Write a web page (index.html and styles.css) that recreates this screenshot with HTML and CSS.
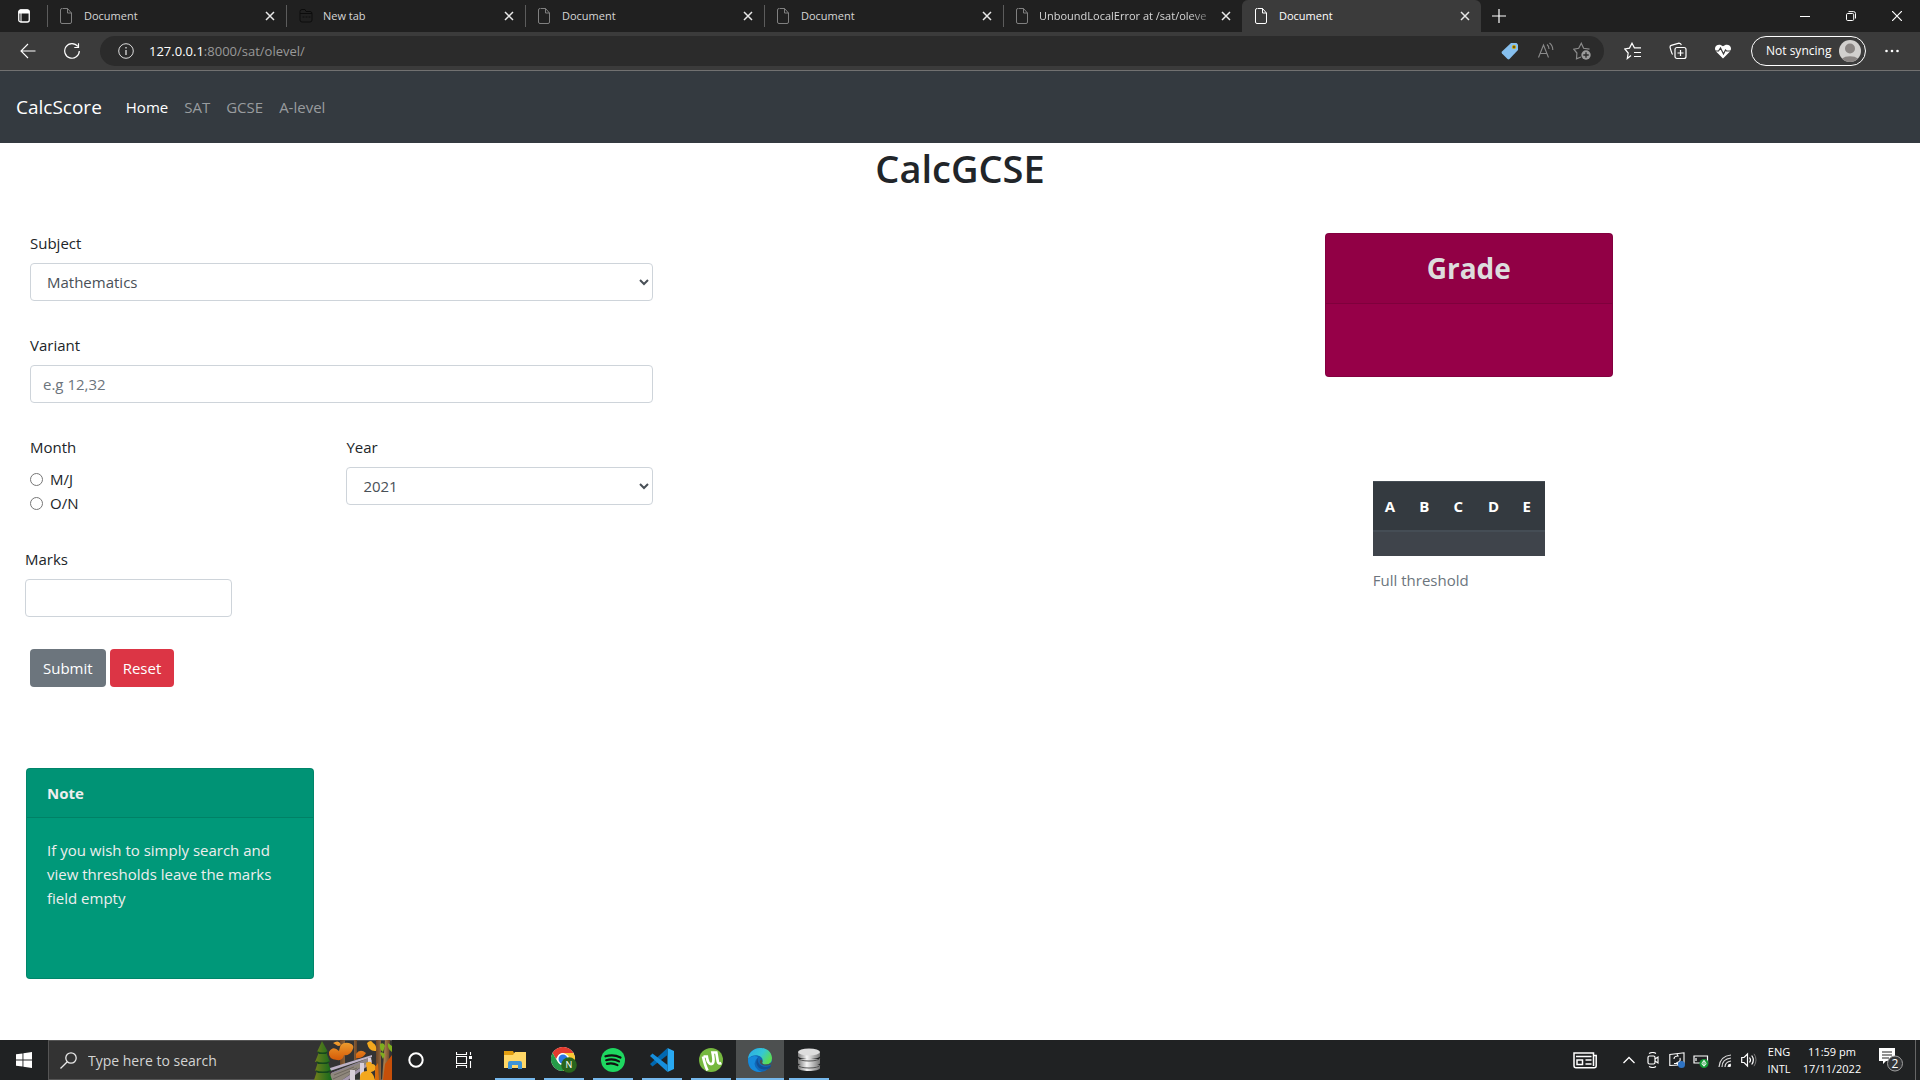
FILE: index.html
```html
<!DOCTYPE html>
<html lang="en">
<head>
<meta charset="utf-8">
<meta name="viewport" content="width=device-width, initial-scale=1">
<title>Document</title>
<link rel="stylesheet" href="styles.css">
</head>
<body>
<svg class="defs" aria-hidden="true">
  <symbol id="page" viewBox="0 0 12 18"><path d="M2.5 1.5h5l4 4.5v9a1.500 1.500 0 0 1-1.500 1.500H2A1.500 1.500 0 0 1 .5 15V3A1.500 1.500 0 0 1 2 1.500M7.500 1.500V6h4" fill="none" stroke="currentColor"/></symbol>
  <symbol id="cross" viewBox="0 0 10 10"><path d="M1 1l8 8M9 1l-8 8" fill="none" stroke="currentColor" stroke-width="1.500"/></symbol>
</svg>

<header class="browser">
  <div class="tabstrip">
    <button class="workspace" aria-label="Tab actions"><svg width="12" height="14" viewBox="0 0 12 14"><rect x=".75" y="1" width="10.500" height="12" rx="2" fill="none" stroke="#fff" stroke-width="1.300"/><path d="M.5 4.500V3A2.500 2.500 0 0 1 3 .5h6A2.500 2.500 0 0 1 11.500 3v1.500z" fill="#fff"/><path d="M3 4v9" stroke="#fff"/></svg></button>
    <div class="tab"><svg class="fav"><use href="#page"/></svg><span>Document</span><button aria-label="Close tab"><svg><use href="#cross"/></svg></button></div>
    <div class="tab newtab"><svg class="fav wide" viewBox="0 0 14 16"><path d="M1 3.500A2 2 0 0 1 3 1.500h3l1 2h4a2 2 0 0 1 2 2V12a2 2 0 0 1-2 2H3a2 2 0 0 1-2-2zM1 5.500h12M3.500 9h2M6.500 9h2M9.500 9h2" fill="none" stroke="#0c0c0c"/></svg><span>New tab</span><button aria-label="Close tab"><svg><use href="#cross"/></svg></button></div>
    <div class="tab"><svg class="fav"><use href="#page"/></svg><span>Document</span><button aria-label="Close tab"><svg><use href="#cross"/></svg></button></div>
    <div class="tab"><svg class="fav"><use href="#page"/></svg><span>Document</span><button aria-label="Close tab"><svg><use href="#cross"/></svg></button></div>
    <div class="tab faded"><svg class="fav"><use href="#page"/></svg><span>UnboundLocalError at /sat/oleve</span><button aria-label="Close tab"><svg><use href="#cross"/></svg></button></div>
    <div class="tab active"><svg class="fav"><use href="#page"/></svg><span>Document</span><button aria-label="Close tab"><svg><use href="#cross"/></svg></button></div>
    <button class="addtab" aria-label="New tab"><svg width="14" height="14" viewBox="0 0 14 14"><path d="M7 0v14M0 7h14" stroke="#fff" stroke-width="1.200"/></svg></button>
    <div class="window-buttons">
      <button aria-label="Minimise"><svg width="10" height="10" viewBox="0 0 10 10"><path d="M0 5.500h10" stroke="#fff"/></svg></button>
      <button aria-label="Restore"><svg width="10" height="10" viewBox="0 0 10 10"><path d="M2 2.500h4.500A1.200 1.200 0 0 1 7.700 3.700v4.600a1.200 1.200 0 0 1-1.200 1.200H1.700A1.200 1.200 0 0 1 .5 8.300V3.700A1.200 1.200 0 0 1 1.700 2.500zM2.500.6H7.500a2 2 0 0 1 2 2V7.500" fill="none" stroke="#fff"/></svg></button>
      <button aria-label="Close window"><svg width="10" height="10" viewBox="0 0 10 10"><path d="M0 0l10 10M10 0L0 10" stroke="#fff" stroke-width="1.200"/></svg></button>
    </div>
  </div>
  <div class="toolbar">
    <button class="tool" aria-label="Back"><svg width="16" height="16" viewBox="0 0 16 16"><path d="M15.500 8H1M8 1L1 8l7 7" fill="none" stroke="#fff" stroke-width="1.100"/></svg></button>
    <button class="tool" aria-label="Refresh"><svg width="16" height="16" viewBox="0 0 16 16"><path d="M13.800 3.500A7.300 7.300 0 1 0 15.300 8M14.500.3v4.200h-4.200" fill="none" stroke="#fff" stroke-width="1.200"/></svg></button>
    <div class="address">
      <svg width="16" height="16" viewBox="0 0 16 16"><circle cx="8" cy="8" r="7.300" fill="none" stroke="#ddd"/><path d="M8 7v5M8 4v1.500" stroke="#ddd" stroke-width="1.300"/></svg>
      <a class="url" href="http://127.0.0.1:8000/sat/olevel/"><b>127.0.0.1</b>:8000/sat/olevel/</a>
      <button aria-label="Shopping"><svg width="18" height="18" viewBox="0 0 18 18"><path d="M10 1h5.500L17 2.500V8l-8.500 9a1.500 1.500 0 0 1-2 0L1 11.500a1.500 1.500 0 0 1 0-2z" fill="#86bfee"/><circle cx="13" cy="5" r="1.500" fill="#333" stroke="#d6a800" stroke-width="1.200"/></svg></button>
      <button aria-label="Read aloud"><svg width="18" height="18" viewBox="0 0 18 18"><path d="M1.500 15.500L6.500 3l5 12.500M3.200 11.500h6.700M10 2.500q2 1.500 2 4.500M12.500 1q3.300 2.500 3.300 7" fill="none" stroke="#8b8b8b" stroke-width="1.100"/></svg></button>
      <button aria-label="Add favourite"><svg width="18" height="18" viewBox="0 0 18 18"><path d="M8 15l-4.500 1.800.4-5.800L.8 7.200l4.900-.9L8.300 1.300l2.300 5 5.900.9" fill="none" stroke="#8b8b8b" stroke-width="1.200"/><circle cx="13" cy="13" r="4.700" fill="#9a9a9a"/><path d="M13 10.300v5.400M10.300 13h5.400" stroke="#2b2b2b" stroke-width="1.300"/></svg></button>
    </div>
    <button class="tool wide" aria-label="Favourites"><svg width="18" height="18" viewBox="0 0 18 18"><path d="M7 13.500L3.300 16.500l.9-5.500L.8 7l4.700-.9L8 1.200l2.400 4.600H17M10 10.500h7M10 14.500h7" fill="none" stroke="#fff" stroke-width="1.200"/></svg></button>
    <button class="tool wide" aria-label="Collections"><svg width="18" height="18" viewBox="0 0 18 18"><rect x="6" y="5.500" width="11" height="11" rx="2" fill="none" stroke="#fff" stroke-width="1.200"/><path d="M11.500 8v6M8.500 11h6M3.600 12.500Q2.500 11 1 5.200 1 3.800 2.200 3.400L10 1.100q2 0 2.300 2" fill="none" stroke="#fff" stroke-width="1.200"/></svg></button>
    <button class="tool wide" aria-label="Browser essentials"><svg width="18" height="18" viewBox="0 0 18 18"><path d="M9 16.500L2 9.500C-1.500 4 5 .5 9 4.300 13 .5 19.500 4 16 9.500z" fill="#fff"/><path d="M0 9h4.500l2-3 3 6 2-4 1 1H18" fill="none" stroke="#3b3b3b" stroke-width="1.200"/></svg></button>
    <button class="profile">Not syncing<svg width="22" height="22" viewBox="0 0 22 22"><circle cx="11" cy="11" r="11" fill="#d2d0ce"/><circle cx="11" cy="8.500" r="5" fill="#8a8583"/><path d="M3 18.500a9.500 5 0 0 1 16 0A11 11 0 0 1 3 18.500" fill="#8a8583"/></svg></button>
    <button class="tool more" aria-label="Settings"><svg width="14" height="4" viewBox="0 0 14 4"><circle cx="1.500" cy="2" r="1.300" fill="#fff"/><circle cx="7" cy="2" r="1.300" fill="#fff"/><circle cx="12.500" cy="2" r="1.300" fill="#fff"/></svg></button>
  </div>
</header>

<nav class="navbar">
  <a class="brand" href="#">CalcScore</a>
  <a class="current" href="#">Home</a>
  <a href="#">SAT</a>
  <a href="#">GCSE</a>
  <a href="#">A-level</a>
</nav>

<main>
  <h1>CalcGCSE</h1>
  <div class="columns">
    <div class="left">
      <form>
        <div class="field"><label for="subject">Subject</label><select id="subject"><option>Mathematics</option></select></div>
        <div class="field"><label for="variant">Variant</label><input id="variant" type="text" placeholder="e.g 12,32"></div>
        <div class="pair">
          <fieldset>
            <legend>Month</legend>
            <label class="radio"><input type="radio" name="month">M/J</label>
            <label class="radio"><input type="radio" name="month">O/N</label>
          </fieldset>
          <div class="field"><label for="year">Year</label><select id="year"><option>2021</option></select></div>
        </div>
        <div class="field marks"><label for="marks">Marks</label><input id="marks" type="text"></div>
        <div class="actions"><button type="submit" class="btn">Submit</button><button type="reset" class="btn danger">Reset</button></div>
      </form>
      <section class="card note">
        <h2>Note</h2>
        <p>If you wish to simply search and view thresholds leave the marks field empty</p>
      </section>
    </div>
    <div class="right">
      <section class="card grade"><h2>Grade</h2></section>
      <table>
        <caption>Full threshold</caption>
        <thead><tr><th>A</th><th>B</th><th>C</th><th>D</th><th>E</th></tr></thead>
        <tbody><tr><td></td><td></td><td></td><td></td><td></td></tr></tbody>
      </table>
    </div>
  </div>
</main>

<footer class="taskbar">
  <button class="task" aria-label="Start"><svg width="16" height="16" viewBox="0 0 16 16"><path d="M0 2.300L6.500 1.400V7.500H0zM7.400 1.200L16 0v7.500H7.400zM0 8.400h6.500v6.200L0 13.700zM7.400 8.400H16V16l-8.600-1.200z" fill="#fff"/></svg></button>
  <div class="search">
    <svg class="lens" width="17" height="17" viewBox="0 0 17 17"><circle cx="11" cy="6" r="5.200" fill="none" stroke="#e8e8e8" stroke-width="1.300"/><path d="M7.300 9.700L.5 16.500" stroke="#e8e8e8" stroke-width="1.300"/></svg>
    <input type="text" aria-label="Search" placeholder="Type here to search">
    <svg class="art" width="78" height="40" viewBox="0 0 78 40">
      <defs>
        <linearGradient id="bark"><stop stop-color="#6b4527"/><stop offset=".6" stop-color="#a97e4e"/><stop offset="1" stop-color="#6b4527"/></linearGradient>
        <linearGradient id="leaf" x2="0" y2="1"><stop stop-color="#f0a030"/><stop offset="1" stop-color="#d45a08"/></linearGradient>
        <linearGradient id="fir"><stop stop-color="#74801c"/><stop offset="1" stop-color="#13691c"/></linearGradient>
      </defs>
      <path d="M26 0h5v26h-5zM40 0h3v20h-3z" fill="url(#bark)"/>
      <path d="M15 12q4-7 10-1 1-10 10-8 7 2 3 8-3 5-8 4-1 6-7 5-9-1-8-8M19 3q5-3 7 0 2 3-2 3zM42 14q4-6 10-1-3 6-10 5z" fill="url(#leaf)"/>
      <path d="M17 33L57 17l1 4-14 8-16 11H15z" fill="#8f877c"/>
      <path d="M20 35l20-8M19 39l24-11" stroke="#6e675f" fill="none"/>
      <path d="M16 28L58 15v2L16 31z" fill="#bdb2c6"/>
      <path d="M18 33L56 19" stroke="#8b8198" fill="none"/>
      <path d="M28 40L58 20v3L34 40z" fill="#a698ae"/>
      <path d="M36 30h5v10h-5zM46 23h4v17h-4zM54 18h3v12h-3z" fill="#d9cfda"/>
      <path d="M62 0h5v40h-5zM71 0h5l-2 40h-6z" fill="url(#bark)"/>
      <path d="M53 3q4-4 6 0 4 2 3 8-7 1-9-8M52 23q5-3 6 1 4 0 4 5-4 5-9 2zM46 40q-1-9 7-9 6 0 8 9z" fill="#f3a81e"/>
      <path d="M66 4q4-2 5 2l-2 6q-4-3-3-8M66 13q3-2 5 2l-2 4zM74 3l4 3v6q-5-3-4-9" fill="#7fae1e"/>
      <path d="M71 24l7-9v25h-9z" fill="#c64f09"/><path d="M61 27l3-4 1 17h-4z" fill="#d56b0c"/>
      <path d="M8 1l6 11h-2l4 10h-2l3 9h-2l3 9H0l3-9H1l3-9H1l4-10H3z" fill="url(#fir)"/>
      <path d="M3 11q6 3 11 0l-2 3H5zM2 21q7 3 14 0l-3 3H4zM1 30q8 3 16 0l-3 3H4z" fill="#15481c"/>
    </svg>
  </div>
  <button class="task" aria-label="Cortana"><svg width="16" height="16" viewBox="0 0 16 16"><circle cx="8" cy="8" r="6.700" fill="none" stroke="#fff" stroke-width="2"/></svg></button>
  <button class="task" aria-label="Task view"><svg width="16" height="16" viewBox="0 0 16 16"><path d="M.5 0v2.500h10V0M.5 16v-2.500h10V16M.5 4.500h10v7H.5zM14.500 0v3M14.500 9v7" fill="none" stroke="#fff" stroke-width="1.100"/><path d="M13 4h3v3h-3z" fill="#fff"/></svg></button>
  <div class="apps">
    <button class="task open" aria-label="File Explorer"><svg width="22" height="18" viewBox="0 0 22 18"><path d="M0 0h9l1 2H22v15H0z" fill="#e29e10"/><path d="M0 4h9l2-3h11v16H0z" fill="#ffd766"/><path d="M4 18v-6q0-2 2-2h10q2 0 2 2v6h-4v-4H8v4z" fill="#3d93d6"/></svg></button>
    <button class="task open" aria-label="Chrome"><svg width="26" height="26" viewBox="0 0 26 26"><circle cx="12" cy="12" r="12" fill="#fff"/><path d="M1.600 6A12 12 0 0 1 22.400 6H12A6 6 0 0 0 6.500 9.500L5 12z" fill="#e33b2e"/><path d="M22.400 6A12 12 0 0 1 12 24L17.200 15A6 6 0 0 0 17 8.500L12 6z" fill="#fcc934"/><path d="M12 24A12 12 0 0 1 1.600 6L6.800 15A6 6 0 0 0 13 18z" fill="#259b48"/><circle cx="12" cy="12" r="5.700" fill="#fff"/><circle cx="12" cy="12" r="4.500" fill="#2b78e4"/><circle cx="18" cy="18" r="7.800" fill="#29651d"/><text x="18" y="21" class="badge-letter">N</text></svg></button>
    <button class="task open" aria-label="Spotify"><svg width="24" height="24" viewBox="0 0 24 24"><circle cx="12" cy="12" r="12" fill="#1ed760"/><path d="M4.500 8.300q8-2.500 15 1.200M5.200 12.200q7-2 12.800 1.200M6 15.900q5.500-1.500 10.500 1.200" fill="none" stroke="#111" stroke-width="2.200" stroke-linecap="round"/></svg></button>
    <button class="task open" aria-label="Visual Studio Code"><svg width="24" height="24" viewBox="0 0 24 24"><path d="M17.500 0L24 3v18l-6.500 3z" fill="#29a9f2"/><path d="M17.500 0v7L2.500 18.500 0 16z" fill="#0068b0"/><path d="M17.500 24v-7L2.500 5.500 0 8z" fill="#168fdc"/></svg></button>
    <button class="task open" aria-label="uTorrent"><svg width="24" height="24" viewBox="0 0 24 24"><circle cx="12" cy="12" r="12" fill="#76b83f"/><path d="M4 8.500q2 9 4.500 14M4.500 8.500h3.300q1 8 4.700 7.500 3-.5 1.500-9l-.5-2.500h3.800l1.500 9q.5 3 3.500 1.500" fill="none" stroke="#fff" stroke-width="2.700"/></svg></button>
    <button class="task open focus" aria-label="Edge"><svg width="24" height="24" viewBox="0 0 24 24"><defs><linearGradient id="edge-top" y2=".5"><stop stop-color="#2aa8e8"/><stop offset=".6" stop-color="#35c8d4"/><stop offset="1" stop-color="#5bdc55"/></linearGradient></defs><circle cx="12" cy="12" r="12" fill="#1067b8"/><path d="M0 11C1-3 23-4 24 10q0 6-6 6.500-5 0-3.500-3C16 8 6 4 0 11" fill="url(#edge-top)"/><path d="M0 11q5-5 10-2-7 7 0 13 1 1 4 1.800Q0 25 0 11" fill="#1689da"/><path d="M10.500 9q-2 4 1 7.500 4 4 10.300 1.500Q24 16 22 20q-6 3-11 0-5-5-.5-11" fill="#124f95"/><path d="M14.500 13.500q-1.500 3 3.500 3 3 0 6-2.500l-.5 2.500q-5 2-9 .5-4-2-2-5 1.500-1.500 2 1.500" fill="#4d5050"/></svg></button>
    <button class="task open" aria-label="Database"><svg width="24" height="24" viewBox="0 0 24 24"><defs><linearGradient id="metal"><stop stop-color="#777"/><stop offset=".4" stop-color="#f4f4f4"/><stop offset="1" stop-color="#777"/></linearGradient></defs><path d="M1 4v4c0 4 22 4 22 0V4zM1 11v4c0 4 22 4 22 0v-4zM1 17v3c0 4 22 4 22 0v-3z" fill="url(#metal)"/><path d="M1 10c0 4 22 4 22 0M1 17c0 4 22 4 22 0" fill="none" stroke="#555"/><ellipse cx="12" cy="4" rx="11" ry="3.500" fill="#ddd"/></svg></button>
  </div>
  <div class="tray">
    <svg width="24" height="17" viewBox="0 0 24 17"><path d="M20.500 3.500h2.700v10.300a2 2 0 0 1-2 2H3a2 2 0 0 1-2-2V1h19.500v13M3 4.500h15.500M12.500 8h6M12.500 12h6M4 8h5.500v4.500H4z" fill="none" stroke="#fff" stroke-width="1.500"/></svg>
    <svg class="chevron" width="12" height="8" viewBox="0 0 12 8"><path d="M.5 7L6 1.500 11.500 7" fill="none" stroke="#fff" stroke-width="1.300"/></svg>
    <div class="status">
      <svg width="16" height="16" viewBox="0 0 16 16"><rect x="3" y="4" width="7" height="8" rx="1.500" fill="none" stroke="#fff" stroke-width="1.200"/><path d="M10 7l3-2v6l-3-2M4 1.500q4-2 7 0M4 14.500q4 2 7 0" fill="none" stroke="#fff" stroke-width="1.100"/></svg>
      <svg width="16" height="16" viewBox="0 0 16 16"><path d="M.8 2.500L15 .8v12L.8 13.500zM5 7q0-3 4-3l-1-2M11 6q1 4-3 4.500l1 2M5 11.500h3" fill="none" stroke="#fff" stroke-width="1.100"/><circle cx="12.500" cy="12.500" r="3.500" fill="#2e73c3"/></svg>
      <svg width="16" height="16" viewBox="0 0 16 16"><path d="M1 4h13.500v7H1zM3 6v3" fill="none" stroke="#fff" stroke-width="1.200"/><circle cx="11" cy="11.500" r="4.500" fill="#149a35"/><path d="M11 8.500q4 4 0 5-4-1 0-5v6" fill="none" stroke="#fff"/></svg>
      <svg width="16" height="16" viewBox="0 0 16 16"><path d="M2 15Q3 4 14 3M5 15q0-8 9-9M8 15q0-5 6-6M11 15q0-2 3-3" fill="none" stroke="#ddd" stroke-width="1.200"/><circle cx="12.500" cy="13.500" r="1.500" fill="#fff"/></svg>
      <svg width="16" height="16" viewBox="0 0 16 16"><path d="M.7 5.500H3L6.500 2v12L3 10.500H.7zM8.500 5.500q2 2.500 0 5M10.700 3.500q3.300 4.500 0 9" fill="none" stroke="#fff" stroke-width="1.200"/><path d="M13 1.800q4 6 0 12.400" fill="none" stroke="#777"/></svg>
    </div>
    <div class="lang">ENG<br>INTL</div>
    <div class="clock">11:59 pm<br>17/11/2022</div>
    <svg class="notify" width="24" height="24" viewBox="0 0 24 24"><path d="M0 0h16v13H7l-3 3v-3H0z" fill="#fff"/><path d="M3 4h10M3 7h10M3 10h7" stroke="#222"/><circle cx="16" cy="15.500" r="7.500" fill="#343638" stroke="#a0a0a0"/><text x="16" y="19.500" class="count">2</text></svg>
  </div>
</footer>
</body>
</html>
```

FILE: styles.css
```css
* { box-sizing: border-box; }

body {
  margin: 0;
  min-height: 100vh;
  display: flex;
  flex-direction: column;
  background: #fff;
  color: #212529;
  font: 15px/24px "Open Sans", "Noto Sans", sans-serif;
}

button, input, select { font: inherit; margin: 0; }
button { border: 0; padding: 0; background: none; color: inherit; }
a { color: inherit; text-decoration: none; }
svg { display: block; flex: none; }
.defs { display: none; }

/* Browser frame */
.browser { color: #fff; font-size: 12px; }
.tabstrip { display: flex; height: 32px; background: #202020; }
.workspace { width: 47px; display: grid; place-items: center; }
.tab {
  flex: 0 1 239px;
  min-width: 0;
  display: flex;
  align-items: center;
  gap: 12px;
  padding: 0 11px 0 12px;
  border-left: 1px solid #5c5c5c;
  border-image: linear-gradient(transparent 6px, #5c5c5c 6px, #5c5c5c 26px, transparent 26px) 1;
  color: #d6d6d6;
  font-size: 11px;
}
.tab span { flex: 1; white-space: nowrap; }
.faded { gap: 11px; }
.faded span { mask-image: linear-gradient(90deg, #000 88%, transparent 105%); }
.fav { width: 12px; height: 18px; color: #808080; }
.fav.wide { width: 14px; height: 16px; }
.newtab { gap: 10px; }
.tab button svg { width: 10px; height: 10px; color: #e8e8e8; }
.tab.active { background: #3b3b3b; border-image: none; border-color: #3b3b3b; border-radius: 6px 6px 0 0; color: #fff; }
.active .fav { color: #fff; }
.addtab { width: 36px; display: grid; place-items: center; }
.window-buttons { display: flex; margin-left: auto; }
.window-buttons button { width: 46px; display: grid; place-items: center; }

.toolbar {
  display: flex;
  align-items: center;
  height: 39px;
  padding: 0 10px 0 6px;
  background: #3b3b3b;
  border-bottom: 1px solid #717171;
}
.tool { width: 44px; height: 30px; display: grid; place-items: center; }
.wide.tool { width: 45px; }
.toolbar .wide:nth-of-type(3) { margin-left: 6px; }
.address {
  flex: 1;
  display: flex;
  align-items: center;
  gap: 18px;
  height: 30px;
  margin-left: 6px;
  padding: 0 13px 0 18px;
  border-radius: 15px;
  background: #2b2b2b;
}
.url { flex: 1; color: #999; font-size: 13px; margin-left: -3px; }
.url b { color: #fff; font-weight: 400; }
.profile {
  display: flex;
  align-items: center;
  justify-content: space-between;
  width: 115px;
  height: 30px;
  margin-left: 6px;
  padding: 0 4px 0 14px;
  border: 1px solid #fff;
  border-radius: 15px;
}
.more { width: 36px; margin-left: 8px; }

/* Site navigation */
.navbar {
  display: flex;
  align-items: center;
  gap: 16px;
  height: 72px;
  padding: 0 16px;
  background: #343a40;
  color: #999c9f;
}
.brand { margin-right: 8px; color: #fff; font-size: 19px; }
.current { color: #fff; }

/* Page */
main { flex: 1; padding-bottom: 61px; }
h1 { margin: 0; text-align: center; font-size: 38px; line-height: 50px; font-weight: 600; }
.columns { display: grid; grid-template-columns: 34% 1fr 31%; padding-top: 38px; }
.right { grid-column: 3; padding-top: 2px; }
form { display: grid; gap: 32px; padding-left: 30px; }
.field { display: grid; gap: 8px; align-content: start; }
select, input[type="text"] {
  width: 100%;
  height: 38px;
  padding: 6px 12px;
  border: 1px solid #ced4da;
  border-radius: 4px;
  background: #fff;
  color: #495057;
}
input::placeholder { color: #6c757d; opacity: 1; }
.pair { display: grid; grid-template-columns: 1fr 1fr; gap: 10px; }
fieldset { min-width: 0; margin: 0; padding: 0; border: 0; }
legend { padding: 0; margin-bottom: 8px; }
.radio { display: flex; align-items: center; gap: 7px; }
.radio input { width: 13px; height: 13px; margin: 0; }
.marks { width: 207px; margin-left: -5px; }
.actions { display: flex; gap: 4px; }
.btn { height: 38px; padding: 0 13px; border-radius: 4px; background: #6c757d; color: #fff; }
.danger { background: #dc3545; }

.card { width: 288px; border: 1px solid rgba(0, 0, 0, .12); border-radius: 4px; }
.card h2 { margin: 0; padding: 12px 20px; background: rgba(0, 0, 0, .03); border-bottom: 1px solid rgba(0, 0, 0, .12); }
.note { min-height: 211px; margin: 81px 0 0 26px; background: #009879; color: #eee; }
.note h2 { font-size: 15px; line-height: 24px; }
.note p { margin: 0; padding: 20px; }
.grade { height: 144px; background: #960048; color: #ddd; text-align: center; }
.grade h2 { font-size: 28px; line-height: 45px; }

table { width: 172px; margin: 104px 0 0 48px; border-collapse: separate; border-spacing: 0; table-layout: fixed; background: #343a40; color: #fff; }
caption { caption-side: bottom; padding-top: 12px; color: #6c757d; text-align: left; }
th { padding: 12px 0 12px 12px; border-top: 1px solid #454d55; border-bottom: 2px solid #454d55; text-align: left; }
td { height: 24px; padding: 0; background: #3f444b; }

/* Taskbar */
.taskbar { display: flex; height: 40px; background: #202223; color: #fff; }
.task { width: 48px; height: 40px; display: grid; place-items: center; }
.search { display: flex; align-items: center; gap: 11px; width: 344px; padding-left: 11px; background: #333; border: 1px solid #555; border-right: 0; }
.search input[type="text"] { flex: 1; min-width: 0; height: 36px; padding: 0; border: 0; background: none; color: #fff; font-size: 14px; }
.search input::placeholder { color: #d4d4d4; }
.apps { display: flex; gap: 1px; margin-left: 3px; }
.open { background: linear-gradient(#76b9ed, #76b9ed) center bottom / 40px 2px no-repeat; }
.focus { background-color: #4d5050; background-size: 48px 2px; }
.badge-letter { fill: #fff; font-size: 9px; text-anchor: middle; }
.tray { display: flex; align-items: center; margin-left: auto; padding-right: 4px; font-size: 11px; line-height: 17px; text-align: center; }
.chevron { margin: 0 10px 0 26px; }
.status { display: flex; gap: 8px; margin-right: 8px; }
.lang { width: 28px; }
.clock { width: 78px; margin-right: 8px; }
.notify { margin-right: 12px; }
.count { fill: #fff; font-size: 12px; text-anchor: middle; }
.tray::after { content: ""; height: 40px; border-right: 1px solid #666; }
```
